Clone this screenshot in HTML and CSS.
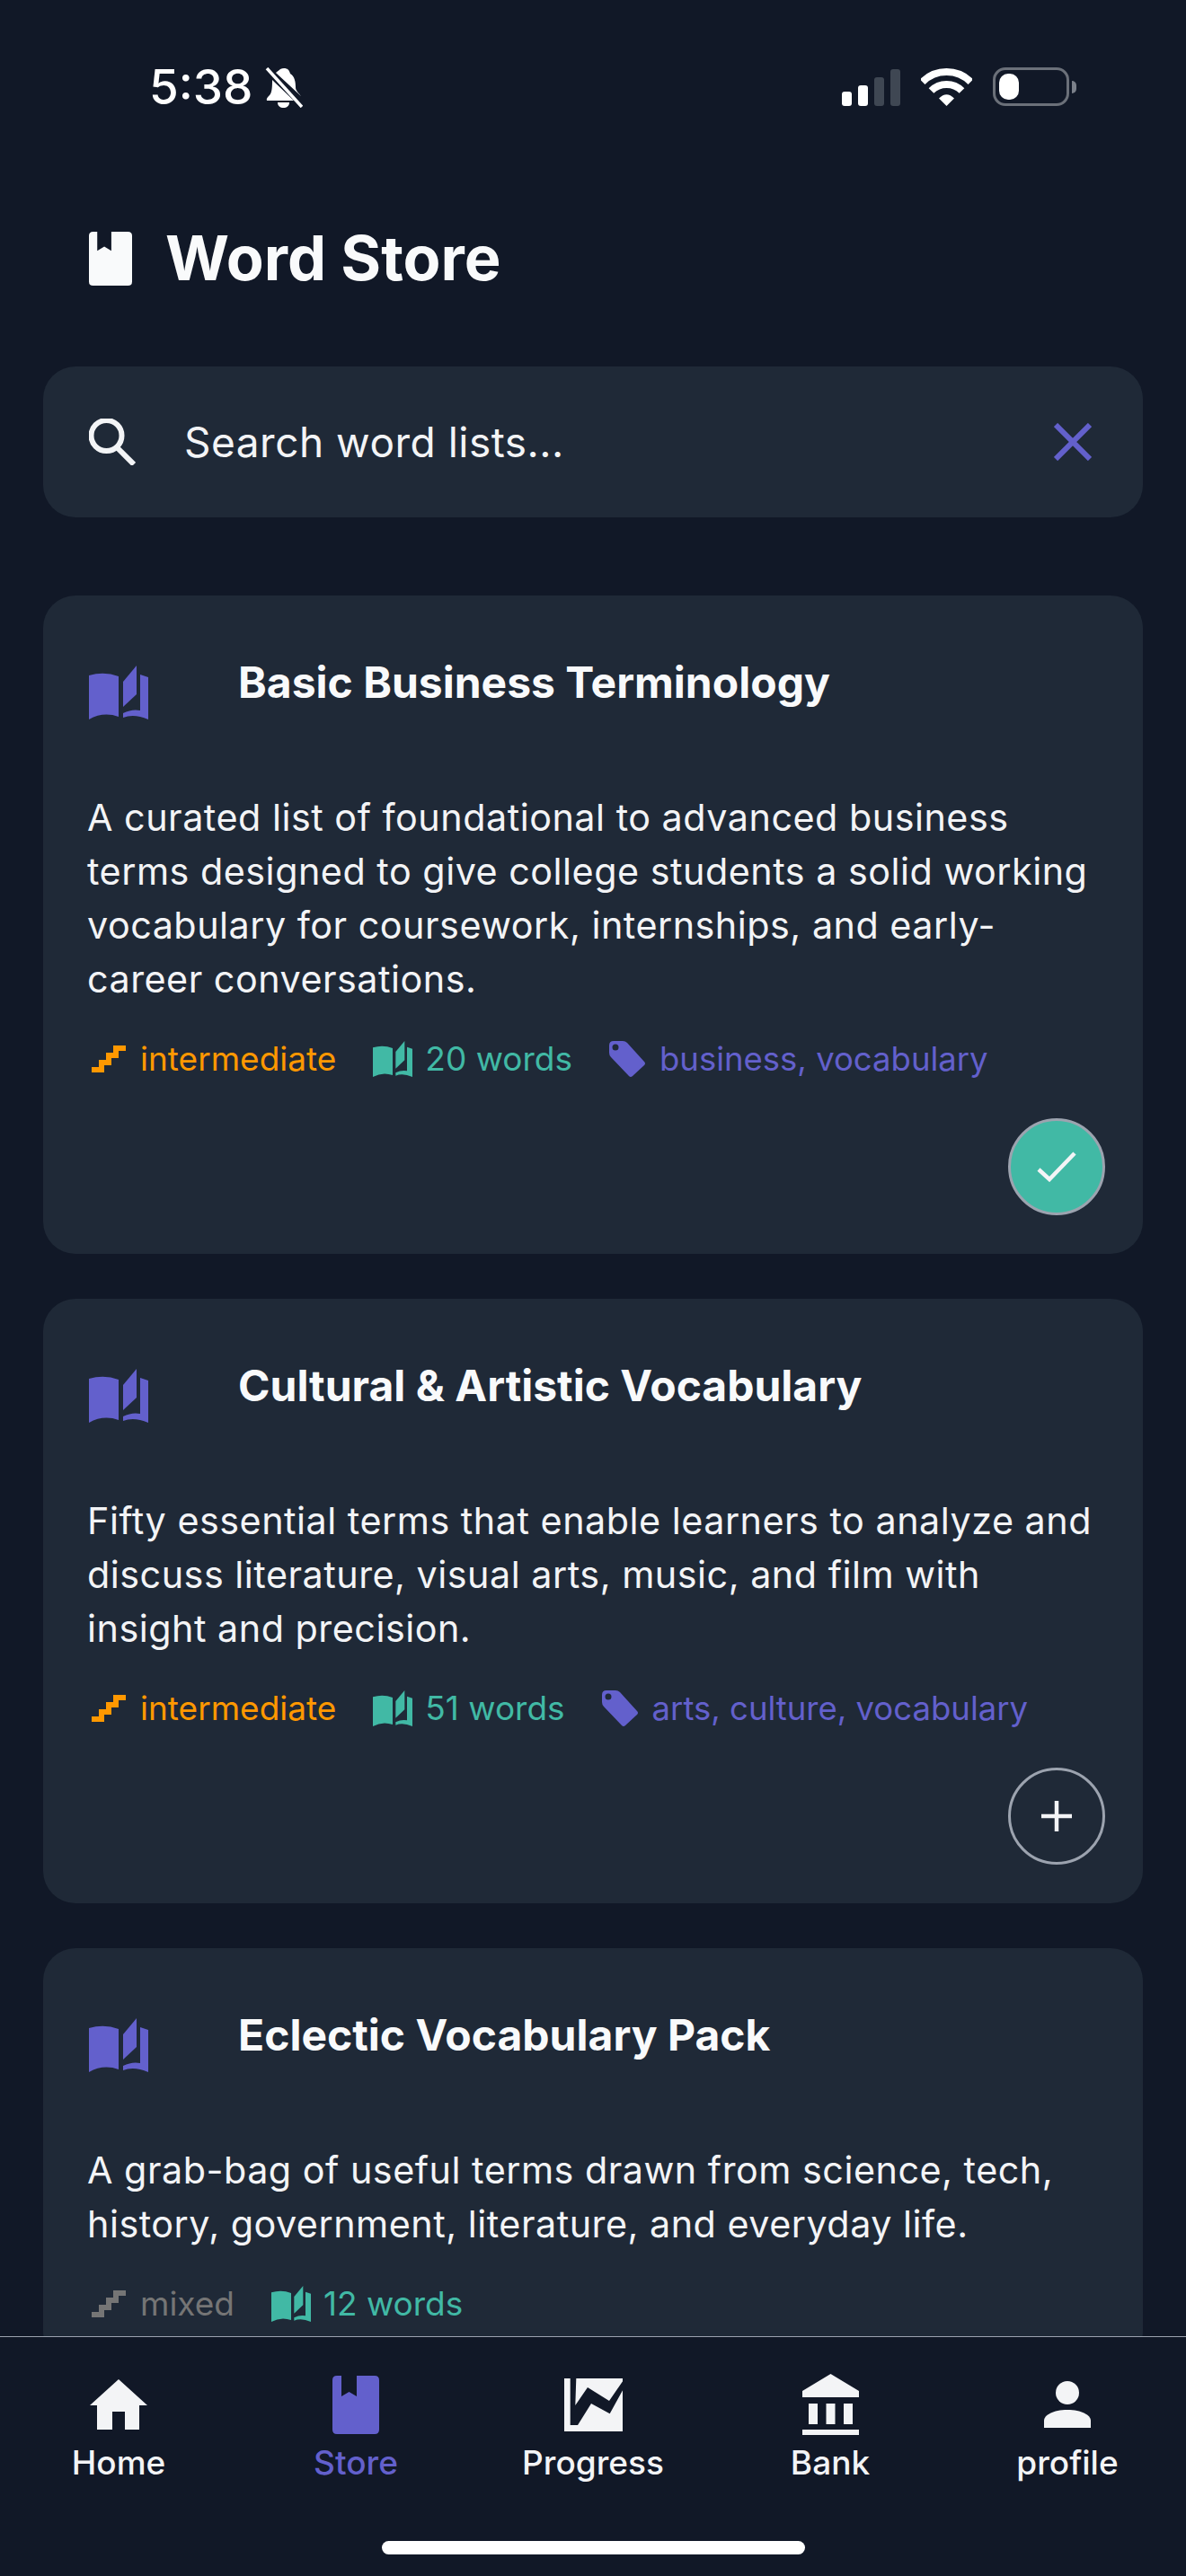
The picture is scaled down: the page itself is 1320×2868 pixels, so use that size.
FILE: index.html
```html
<!DOCTYPE html>
<html lang="en">
<head>
<meta charset="utf-8">
<title>Word Store</title>
<link rel="stylesheet" href="styles.css">
</head>
<body>
<svg class="defs" width="0" height="0">
  <symbol id="i-book" viewBox="0 0 66 60">
    <path d="M0 11Q17 6 33 12V57Q16 51 0 60Z"/>
    <path d="M38 18L53 0V32L38 46Z"/>
    <path d="M57 10L66 13V60Q50 53 38 58V53Q48 48 57 50Z"/>
  </symbol>
  <symbol id="i-stairs" viewBox="0 0 38 30">
    <path d="M38 0V6H30V14H22V22H14V30H0V24H8V16H16V8H24V0Z"/>
  </symbol>
  <symbol id="i-tag" viewBox="0 0 40 40">
    <path fill-rule="evenodd" d="M5 0H15Q18 0 20 2L39 23Q41 25 39 27L26 39Q24 41 22 39L2 18Q0 16 0 13V5Q0 0 5 0ZM7 3.500A3.500 3.500 0 1 0 7 10.500A3.500 3.500 0 1 0 7 3.500Z"/>
  </symbol>
  <symbol id="i-store" viewBox="0 0 52 65">
    <path d="M10 0V23L18.500 18L27 23V0H47Q52 0 52 5V60Q52 65 47 65H5Q0 65 0 60V5Q0 0 5 0Z"/>
  </symbol>
</svg>

<div class="app">
  <div class="status">
    <div class="status-left">
      <span class="time">5:38</span>
      <svg class="bell" viewBox="0 0 42 45">
        <path d="M21 1C25 1 27 3 28 7C33 10 34 16 34 22C34 26 37 28 40 32L12 6C14 4 16 3 17 2Q19 1 21 1ZM8 14L32 37H2C1 35 3 33 5 31C8 28 8 20 8 14ZM14 39H27C27 43 24 45 20.500 45C17 45 14 43 14 39Z"/>
        <path class="bell-slash" d="M2 1L41 44"/>
      </svg>
    </div>
    <div class="status-right">
      <svg class="signal" viewBox="0 0 65 41">
        <rect x="0" y="25" width="11" height="16" rx="3"/>
        <rect x="18" y="18" width="11" height="23" rx="3"/>
        <rect class="off" x="36" y="9" width="11" height="32" rx="3"/>
        <rect class="off" x="54" y="0" width="11" height="41" rx="3"/>
      </svg>
      <svg class="wifi" viewBox="0 0 57 42">
        <path class="wifi-arc" d="M1.630 15.130A38 38 0 0 1 55.370 15.130"/>
        <path class="wifi-arc" d="M11.500 25A24 24 0 0 1 45.500 25"/>
        <path d="M20 33.500Q28.500 25 37 33.500L28.500 42Z"/>
      </svg>
      <div class="battery"><div class="battery-fill"></div></div>
      <div class="battery-nub"></div>
    </div>
  </div>

  <header class="page-head">
    <svg class="head-icon"><use href="#i-store"/></svg>
    <h1>Word Store</h1>
  </header>

  <div class="search">
    <svg class="search-icon" viewBox="0 0 52 52">
      <circle cx="19.500" cy="19" r="17"/>
      <path d="M31 32L50 51"/>
    </svg>
    <span class="search-text">Search word lists...</span>
    <svg class="search-clear" viewBox="0 0 42 42"><path d="M2 2L40 40M40 2L2 40"/></svg>
  </div>

  <main class="list">
    <article class="card">
      <div class="card-head">
        <svg class="card-book"><use href="#i-book"/></svg>
        <h2>Basic Business Terminology</h2>
      </div>
      <p class="desc">A curated list of foundational to advanced business terms designed to give college students a solid working vocabulary for coursework, internships, and early-career conversations.</p>
      <div class="meta">
        <span class="chip level"><svg class="ic-stairs"><use href="#i-stairs"/></svg>intermediate</span>
        <span class="chip count"><svg class="ic-book"><use href="#i-book"/></svg>20 words</span>
        <span class="chip tags"><svg class="ic-tag"><use href="#i-tag"/></svg>business, vocabulary</span>
      </div>
      <div class="card-foot">
        <button class="round done"><svg viewBox="0 0 44 34"><path d="M2 20L14 31L42 2"/></svg></button>
      </div>
    </article>

    <article class="card">
      <div class="card-head">
        <svg class="card-book"><use href="#i-book"/></svg>
        <h2>Cultural &amp; Artistic Vocabulary</h2>
      </div>
      <p class="desc">Fifty essential terms that enable learners to analyze and discuss literature, visual arts, music, and film with insight and precision.</p>
      <div class="meta">
        <span class="chip level"><svg class="ic-stairs"><use href="#i-stairs"/></svg>intermediate</span>
        <span class="chip count"><svg class="ic-book"><use href="#i-book"/></svg>51 words</span>
        <span class="chip tags"><svg class="ic-tag"><use href="#i-tag"/></svg>arts, culture, vocabulary</span>
      </div>
      <div class="card-foot">
        <button class="round"><svg viewBox="0 0 34 34"><path d="M17 0V34M0 17H34"/></svg></button>
      </div>
    </article>

    <article class="card">
      <div class="card-head">
        <svg class="card-book"><use href="#i-book"/></svg>
        <h2>Eclectic Vocabulary Pack</h2>
      </div>
      <p class="desc">A grab-bag of useful terms drawn from science, tech, history, government, literature, and everyday life.</p>
      <div class="meta">
        <span class="chip level mixed"><svg class="ic-stairs"><use href="#i-stairs"/></svg>mixed</span>
        <span class="chip count"><svg class="ic-book"><use href="#i-book"/></svg>12 words</span>
      </div>
    </article>
  </main>

  <nav class="tabs">
    <a class="tab">
      <span class="tab-icon"><svg class="t-home" viewBox="0 0 64 56"><path d="M32 0L64 29H55V56H39V36H25V56H8V29H0Z"/></svg></span>
      <span class="tab-label">Home</span>
    </a>
    <a class="tab active">
      <span class="tab-icon"><svg class="t-store"><use href="#i-store"/></svg></span>
      <span class="tab-label">Store</span>
    </a>
    <a class="tab">
      <span class="tab-icon"><svg class="t-progress" viewBox="0 0 65 59"><path fill-rule="evenodd" d="M0 0H65V59H0ZM6.700 0V52H15L30 28L50.700 39.300L65 13.300V3.300L50 25L26 10L12.300 30L13.300 0Z"/></svg></span>
      <span class="tab-label">Progress</span>
    </a>
    <a class="tab">
      <span class="tab-icon"><svg class="t-bank" viewBox="0 0 63 68"><path d="M31.500 0L63 19V26H0V19ZM7 33H17V56H7ZM26.500 33H36.500V56H26.500ZM46 33H56V56H46ZM0 62H63V72H0Z"/></svg></span>
      <span class="tab-label">Bank</span>
    </a>
    <a class="tab">
      <span class="tab-icon"><svg class="t-profile" viewBox="0 0 52 52"><ellipse cx="26" cy="13" rx="13" ry="13"/><path d="M0 52V44C0 38 10 32 26 32C42 32 52 38 52 44V52Z"/></svg></span>
      <span class="tab-label">profile</span>
    </a>
    <div class="home-bar"></div>
  </nav>
</div>
</body>
</html>
```

FILE: styles.css
```css
* { box-sizing: border-box; }
html, body { margin: 0; padding: 0; }
body { background: #111827; font-family: Inter, "Liberation Sans", sans-serif; color: #f3f4f6; }
svg { display: block; fill: currentColor; }
.defs { position: absolute; }

.app { width: 1320px; height: 2868px; display: flex; flex-direction: column; overflow: hidden; background: #111827; }

/* status bar */
.status { flex: none; height: 258px; padding: 75px 122px 0 166px; display: flex; justify-content: space-between; align-items: flex-start; color: #fff; }
.status-left { display: flex; align-items: center; gap: 14px; height: 45px; }
.time { font-size: 53px; line-height: 45px; font-weight: 500; }
.bell { width: 42px; height: 45px; }
.bell-slash { fill: none; stroke: #fff; stroke-width: 3.500px; }
.status-right { display: flex; align-items: center; height: 43px; }
.signal { width: 65px; height: 41px; margin-top: 1px; fill: #fff; }
.signal .off { fill: #3f4753; }
.wifi { width: 57px; height: 42px; margin-left: 23px; }
.wifi-arc { fill: none; stroke: #fff; stroke-width: 8px; }
.battery { width: 85px; height: 43px; margin-left: 23px; padding: 4px; border: 3px solid #6b7079; border-radius: 14px; }
.battery-fill { width: 22px; height: 29px; background: #fff; border-radius: 10px; }
.battery-nub { width: 5px; height: 14px; margin-left: 3px; background: #7b808a; border-radius: 0 5px 5px 0; }

/* title */
.page-head { flex: none; height: 60px; padding-left: 99px; display: flex; align-items: center; gap: 37px; color: #f9fafb; }
.head-icon { width: 48px; height: 60px; }
.page-head h1 { margin: 0; font-size: 68.500px; line-height: 60px; font-weight: 700; }

/* search */
.search { flex: none; height: 168px; margin: 90px 48px 0; padding: 0 57px 0 51px; display: flex; align-items: center; background: #1f2937; border-radius: 36px; }
.search-icon { width: 52px; height: 52px; fill: none; stroke: #f3f4f6; stroke-width: 6px; }
.search-text { flex: 1; margin-left: 54px; font-size: 46px; letter-spacing: 0.500px; color: #f3f4f6; }
.search-clear { width: 42px; height: 42px; fill: none; stroke: #6360cc; stroke-width: 6px; }

/* cards */
.list { flex: 1; min-height: 0; overflow: hidden; margin-top: 87px; padding: 0 48px; display: flex; flex-direction: column; gap: 50px; }
.card { flex: none; padding: 67px 42px 43px 51px; background: #1f2937; border-radius: 36px; }
.card-head { display: flex; align-items: flex-start; height: 60px; }
.card-book { width: 66px; height: 60px; margin-top: 11px; flex: none; color: #6360cc; }
.card-head h2 { margin: 0 0 0 100px; font-size: 48px; line-height: 60px; font-weight: 700; color: #f9fafb; }
.desc { margin: 90px 0 0 -2px; font-size: 41.300px; line-height: 60px; letter-spacing: 0.500px; color: #f3f4f6; }
.meta { margin-top: 36px; height: 46px; display: flex; align-items: center; gap: 41px; padding-left: 3px; font-size: 37px; line-height: 46px; }
.chip { display: flex; align-items: center; gap: 16px; }
.level { color: #ff9800; }
.level.mixed { color: #757575; }
.count { color: #41b9a5; gap: 14px; }
.tags { color: #6360cc; font-size: 36.500px; }
.ic-stairs { width: 38px; height: 30px; }
.ic-book { width: 44px; height: 40px; }
.ic-tag { width: 40px; height: 40px; }
.card-foot { margin-top: 43px; display: flex; justify-content: flex-end; }
.round { width: 108px; height: 108px; padding: 0; display: flex; align-items: center; justify-content: center; background: transparent; border: 3px solid #9ca3af; border-radius: 50%; color: #f3f4f6; }
.round.done { background: #41b9a5; }
.round svg { width: 34px; height: 34px; fill: none; stroke: #f3f4f6; stroke-width: 4.500px; }
.round.done svg { width: 44px; }

/* bottom nav */
.tabs { flex: none; height: 267px; position: relative; display: grid; grid-template-columns: repeat(5, 264px); align-content: start; padding-top: 40px; border-top: 1px solid #9ca3af; background: #111827; }
.tab { display: flex; flex-direction: column; align-items: center; color: #f3f4f6; }
.tab.active { color: #6360cc; }
.tab-icon { height: 70px; display: flex; align-items: center; justify-content: center; }
.tab-label { margin-top: 7px; font-size: 37px; line-height: 46px; font-weight: 500; }
.t-home { width: 64px; height: 56px; }
.t-store { width: 52px; height: 65px; }
.t-progress { width: 65px; height: 59px; }
.t-bank { width: 63px; height: 68px; }
.t-profile { width: 52px; height: 52px; }
.home-bar { position: absolute; left: 425px; bottom: 24px; width: 471px; height: 15px; background: #fff; border-radius: 8px; }
```
